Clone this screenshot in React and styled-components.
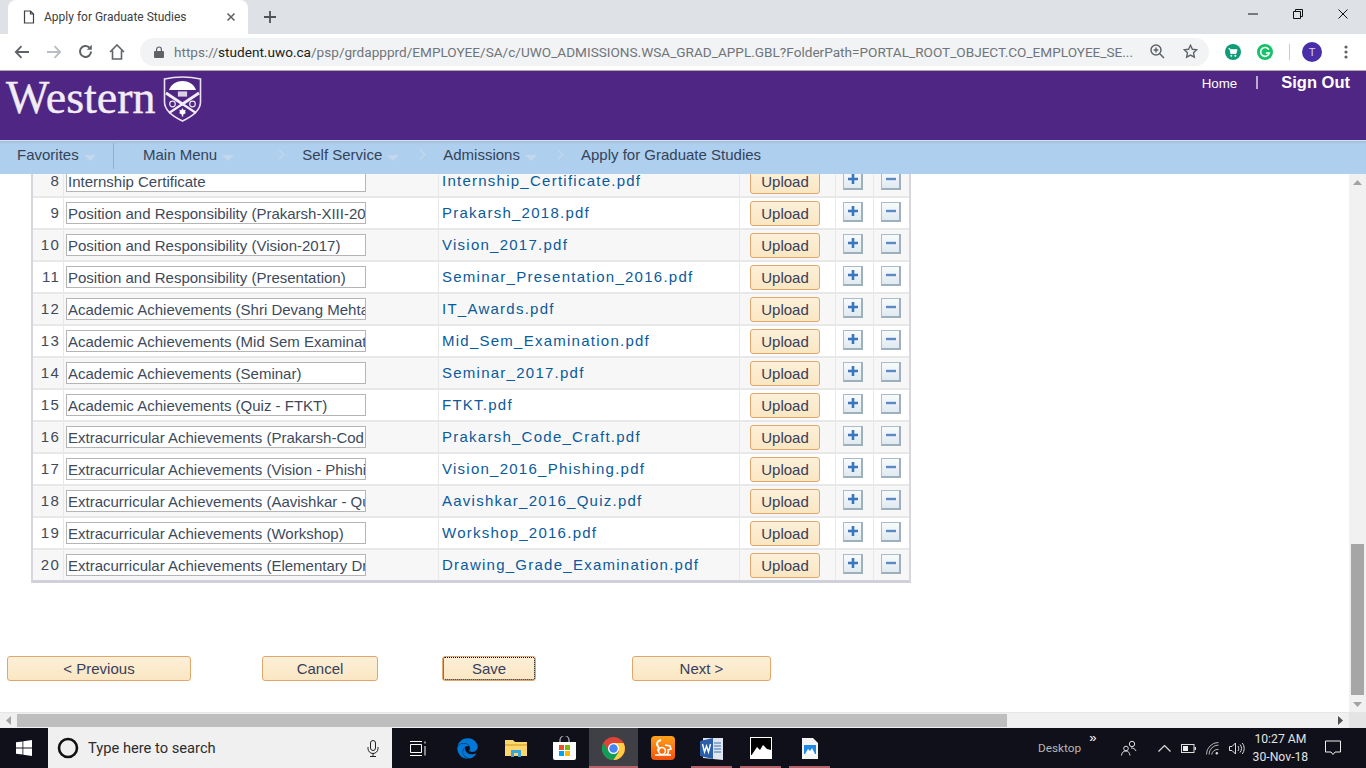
import React from 'react'
import styled, {createGlobalStyle} from 'styled-components'
import {FaEdge} from 'react-icons/fa'

const rows = [
  {n: 8, title: 'Internship Certificate', file: 'Internship_Certificate.pdf'},
  {n: 9, title: 'Position and Responsibility (Prakarsh-XIII-20', file: 'Prakarsh_2018.pdf'},
  {n: 10, title: 'Position and Responsibility (Vision-2017)', file: 'Vision_2017.pdf'},
  {n: 11, title: 'Position and Responsibility (Presentation)', file: 'Seminar_Presentation_2016.pdf'},
  {n: 12, title: 'Academic Achievements (Shri Devang Mehta', file: 'IT_Awards.pdf'},
  {n: 13, title: 'Academic Achievements (Mid Sem Examinat', file: 'Mid_Sem_Examination.pdf'},
  {n: 14, title: 'Academic Achievements (Seminar)', file: 'Seminar_2017.pdf'},
  {n: 15, title: 'Academic Achievements (Quiz - FTKT)', file: 'FTKT.pdf'},
  {n: 16, title: 'Extracurricular Achievements (Prakarsh-Cod', file: 'Prakarsh_Code_Craft.pdf'},
  {n: 17, title: 'Extracurricular Achievements (Vision - Phishi', file: 'Vision_2016_Phishing.pdf'},
  {n: 18, title: 'Extracurricular Achievements (Aavishkar - Qu', file: 'Aavishkar_2016_Quiz.pdf'},
  {n: 19, title: 'Extracurricular Achievements (Workshop)', file: 'Workshop_2016.pdf'},
  {n: 20, title: 'Extracurricular Achievements (Elementary Dr', file: 'Drawing_Grade_Examination.pdf'},
]

const App = () => {
  return (
    <Screen>
      <GlobalStyle />
      <TabStrip>
        <Tab>
          <svg width="12" height="14" viewBox="0 0 12 14" fill="none" stroke="#3c4043" strokeWidth="1.2">
            <path d="M1.5 1h6l3 3v9h-9z" />
            <path d="M7.5 1v3h3" />
          </svg>
          <TabTitle>Apply for Graduate Studies</TabTitle>
          <svg width="10" height="10" viewBox="0 0 10 10" stroke="#5f6368" strokeWidth="1.6">
            <path d="M1.500 1.500l7 7M8.500 1.500l-7 7" />
          </svg>
        </Tab>
        <NewTab>
          <svg width="12" height="12" viewBox="0 0 12 12" stroke="#4f5256" strokeWidth="1.8">
            <path d="M6 0v12M0 6h12" />
          </svg>
        </NewTab>
        <WindowButtons>
          <svg width="10" height="2" viewBox="0 0 10 2"><path d="M0 1h10" stroke="#111" strokeWidth="1" /></svg>
          <svg width="10" height="10" viewBox="0 0 10 10" fill="none" stroke="#111">
            <path d="M.5 2.500h7v7h-7zM2.500 2.500v-2h7v7h-2" />
          </svg>
          <svg width="10" height="10" viewBox="0 0 10 10" stroke="#111"><path d="M.5.5l9 9M9.500.5l-9 9" /></svg>
        </WindowButtons>
      </TabStrip>

      <Toolbar>
        <ToolIcons>
          <svg width="16" height="14" viewBox="0 0 16 14" fill="none" stroke="#5f6368" strokeWidth="1.8">
            <path d="M15 7H2M7.500 1.200L1.800 7l5.700 5.800" />
          </svg>
          <svg width="16" height="14" viewBox="0 0 16 14" fill="none" stroke="#b9bcc0" strokeWidth="1.8">
            <path d="M1 7h13M8.500 1.200L14.200 7l-5.700 5.800" />
          </svg>
          <svg width="15" height="15" viewBox="0 0 15 15" fill="none" stroke="#5f6368" strokeWidth="2">
            <path d="M13 7.500a5.500 5.500 0 1 1-1.700-4" />
            <path d="M13.800.8v5H8.800" fill="#5f6368" stroke="none" />
          </svg>
          <svg width="16" height="16" viewBox="0 0 16 16" fill="none" stroke="#5f6368" strokeWidth="1.6">
            <path d="M1 8l7-7 7 7M3.500 6.500V15h9V6.500" />
          </svg>
        </ToolIcons>
        <Omnibox>
          <svg width="10" height="12" viewBox="0 0 10 12">
            <path d="M1 5h8a1 1 0 0 1 1 1v5a1 1 0 0 1-1 1H1a1 1 0 0 1-1-1V6a1 1 0 0 1 1-1z" fill="#5f6368" />
            <path d="M2.600 5V3.400a2.400 2.400 0 0 1 4.800 0V5" fill="none" stroke="#5f6368" strokeWidth="1.2" />
          </svg>
          <Url>
            https://<b>student.uwo.ca</b>/psp/grdappprd/EMPLOYEE/SA/c/UWO_ADMISSIONS.WSA_GRAD_APPL.GBL?FolderPath=PORTAL_ROOT_OBJECT.CO_EMPLOYEE_SE...
          </Url>
          <svg width="15" height="15" viewBox="0 0 15 15" fill="none" stroke="#5f6368" strokeWidth="1.5">
            <circle cx="6" cy="6" r="5" />
            <path d="M9.800 9.800L14 14M6 3.600v4.800M3.600 6h4.800" />
          </svg>
          <svg width="15" height="15" viewBox="0 0 15 15" fill="none" stroke="#5f6368" strokeWidth="1.4">
            <path d="M7.500 1.300l1.900 3.960 4.300.56-3.150 3 .82 4.300-3.870-2.100-3.870 2.100.82-4.300-3.150-3 4.300-.56z" />
          </svg>
        </Omnibox>
        <Extensions>
          <svg width="16" height="16" viewBox="0 0 16 16">
            <circle cx="8" cy="8" r="8" fill="#0e9d76" />
            <path d="M3.500 4.500h1.300l1 5h5.200l1-3.800H5" fill="#fff" stroke="#fff" strokeWidth=".9" />
            <circle cx="6.300" cy="11.800" r="1" fill="#fff" />
            <circle cx="10.300" cy="11.800" r="1" fill="#fff" />
          </svg>
          <svg width="16" height="16" viewBox="0 0 16 16">
            <circle cx="8" cy="8" r="8" fill="#15c26b" />
            <path d="M11.800 5.600A4.400 4.400 0 1 0 12.300 9H8.800" fill="none" stroke="#fff" strokeWidth="1.700" />
          </svg>
          <ToolDivider />
          <Avatar>T</Avatar>
          <svg width="4" height="14" viewBox="0 0 4 14" fill="#5f6368">
            <circle cx="2" cy="2" r="1.600" />
            <circle cx="2" cy="7" r="1.600" />
            <circle cx="2" cy="12" r="1.600" />
          </svg>
        </Extensions>
      </Toolbar>

      <Banner>
        <Brand>
          <Wordmark>Western</Wordmark>
          <svg width="39" height="46" viewBox="0 0 39 46">
            <path d="M1.500 3C13 .5 26 .5 37.500 3v23c0 9-9.500 15-18 19-8.500-4-18-10-18-19z" fill="#4f2683" stroke="#e9e3f1" strokeWidth="1.600" />
            <path d="M6 14c2-6 8-9 13.500-9S31 8 33 14z" fill="#fff" />
            <path d="M3 17l16.500 11L36 17" fill="none" stroke="#f1ecf6" strokeWidth="2.800" />
            <path d="M19.500 28L6 37M19.500 28L33 37" stroke="#f1ecf6" strokeWidth="2.200" />
            <path d="M14.500 15h10v6h-10z" fill="#d9d0e6" stroke="#4f2683" strokeWidth=".8" />
            <circle cx="9.500" cy="28" r="2.800" fill="none" stroke="#e9e3f1" strokeWidth="1.200" />
            <circle cx="29.500" cy="28" r="2.800" fill="none" stroke="#e9e3f1" strokeWidth="1.200" />
            <path d="M19.500 32l1.200 2.300 2-.5-.7 2.500 1 .8-2.800 1.500v1.900h-1.400v-1.900L16 37.100l1-.8-.7-2.500 2 .5z" fill="#fff" />
          </svg>
        </Brand>
        <UserLinks>
          <HomeLink>Home</HomeLink>
          <LinkDivider />
          <SignOut>Sign Out</SignOut>
        </UserLinks>
      </Banner>

      <NavBar>
        <NavFavorites>
          <NavLabel>Favorites</NavLabel>
          <NavCaret />
        </NavFavorites>
        <NavCrumbs>
          <NavGroup $extra={24}>
            <NavLabel>Main Menu</NavLabel>
            <NavCaret />
          </NavGroup>
          <NavChevron />
          <NavGroup>
            <NavLabel>Self Service</NavLabel>
            <NavCaret />
          </NavGroup>
          <NavChevron />
          <NavGroup>
            <NavLabel>Admissions</NavLabel>
            <NavCaret />
          </NavGroup>
          <NavChevron />
          <NavLabel>Apply for Graduate Studies</NavLabel>
        </NavCrumbs>
      </NavBar>

      <Viewport>
        <Page>
          <Grid>
            {rows.map((r) => (
              <Row key={r.n} $alt={r.n % 2 === 0}>
                <NumCell>{r.n}</NumCell>
                <Cell>
                  <Field>{r.title}</Field>
                </Cell>
                <Cell>
                  <FileLink>{r.file}</FileLink>
                </Cell>
                <Cell>
                  <UploadButton>Upload</UploadButton>
                </Cell>
                <Cell>
                  <RowButton>
                    <svg width="12" height="12" viewBox="0 0 12 12"><path d="M6 1v10M1 6h10" stroke="#3a76c0" strokeWidth="2.600" /></svg>
                  </RowButton>
                </Cell>
                <Cell>
                  <RowButton>
                    <svg width="12" height="12" viewBox="0 0 12 12"><path d="M1 6h10" stroke="#5a8bc4" strokeWidth="2.400" /></svg>
                  </RowButton>
                </Cell>
              </Row>
            ))}
          </Grid>
          <Actions>
            <ActionButton $w={184}>&lt; Previous</ActionButton>
            <ActionButton $w={116}>Cancel</ActionButton>
            <ActionButton $w={94} $focused>Save</ActionButton>
            <ActionButton $w={139}>Next &gt;</ActionButton>
          </Actions>
        </Page>
        <VTrack>
          <svg width="9" height="5" viewBox="0 0 9 5"><path d="M4.500 0L9 5H0z" fill="#a3a3a3" /></svg>
          <VThumb />
          <svg width="9" height="5" viewBox="0 0 9 5"><path d="M0 0h9L4.500 5z" fill="#a3a3a3" /></svg>
        </VTrack>
      </Viewport>

      <HTrack>
        <svg width="5" height="9" viewBox="0 0 5 9"><path d="M5 0v9L0 4.500z" fill="#a3a3a3" /></svg>
        <HThumb />
        <svg width="5" height="9" viewBox="0 0 5 9"><path d="M0 0v9l5-4.500z" fill="#505050" /></svg>
        <HCorner />
      </HTrack>

      <Taskbar>
        <StartButton>
          <svg width="16" height="16" viewBox="0 0 16 16" fill="#fff">
            <path d="M0 2.300l6.500-.9v6.200H0zM7.300 1.300L16 0v7.600H7.300zM0 8.400h6.500v6.200L0 13.700zM7.300 8.400H16V16l-8.700-1.300z" />
          </svg>
        </StartButton>
        <SearchBox>
          <svg width="22" height="22" viewBox="0 0 22 22" fill="none" stroke="#111" strokeWidth="2.600">
            <circle cx="11" cy="11" r="9" />
          </svg>
          <SearchText>Type here to search</SearchText>
          <svg width="12" height="17" viewBox="0 0 12 17" fill="none" stroke="#222" strokeWidth="1">
            <rect x="3.500" y=".5" width="5" height="10" rx="2.500" />
            <path d="M1 7v1.500a5 5 0 0 0 10 0V7M6 13.500v3M3 16.500h6" />
          </svg>
        </SearchBox>
        <TaskApps>
          <TaskApp>
            <svg width="16" height="15" viewBox="0 0 16 15" fill="none" stroke="#fff">
              <path d="M.5 3.500h11v8H.5zM0 .5h12M0 14.500h12M15 .5v2M15 5v9.500" />
            </svg>
          </TaskApp>
          <TaskApp>
            <EdgeIcon />
          </TaskApp>
          <TaskApp>
            <svg width="22" height="18" viewBox="0 0 22 18">
              <path d="M0 1h8l2 2h12v14H0z" fill="#fbd66c" />
              <path d="M0 5h22v2H0z" fill="#e5b644" />
              <path d="M6 11h10v7h-3v-4H9v4H6z" fill="#35a6e0" />
            </svg>
          </TaskApp>
          <TaskApp>
            <svg width="23" height="24" viewBox="0 0 23 24">
              <path d="M7 7V4a4.500 4.500 0 0 1 9 0v3" fill="none" stroke="#ddd" />
              <path d="M0 6h23v16a2 2 0 0 1-2 2H2a2 2 0 0 1-2-2z" fill="#fff" />
              <path d="M6 9h5v5H6z" fill="#f25022" />
              <path d="M12 9h5v5h-5z" fill="#7fba00" />
              <path d="M6 15h5v5H6z" fill="#00a4ef" />
              <path d="M12 15h5v5h-5z" fill="#ffb900" />
            </svg>
          </TaskApp>
          <TaskApp $active $running>
            <svg width="23" height="23" viewBox="0 0 46 46">
              <circle cx="23" cy="23" r="23" fill="#db4437" />
              <path d="M23 23L3 34.500A23 23 0 0 0 23 46l11-12z" fill="#0f9d58" />
              <path d="M23 12h20a23 23 0 0 1-20 34L34 29z" fill="#ffcd40" />
              <path d="M3 11.500L13 29l10 5-20 .5A23 23 0 0 1 3 11.500z" fill="#0f9d58" />
              <circle cx="23" cy="23" r="11" fill="#fff" />
              <circle cx="23" cy="23" r="8.500" fill="#4285f4" />
            </svg>
          </TaskApp>
          <TaskApp>
            <svg width="24" height="24" viewBox="0 0 24 24">
              <defs>
                <linearGradient id="ucFill" x1="0" y1="0" x2="0" y2="1">
                  <stop offset="0" stopColor="#ffa31a" />
                  <stop offset="1" stopColor="#f2500a" />
                </linearGradient>
              </defs>
              <rect width="24" height="24" rx="4" fill="url(#ucFill)" />
              <path d="M10 4C6 5 5 8 7 10.500c1.500 2 1 3.500-1 4" fill="none" stroke="#fff" strokeWidth="2" />
              <path d="M4 19h16M14 9l5 1 1 3-3 1c1 2 0 4-2 5" fill="none" stroke="#fff" strokeWidth="1.600" />
              <circle cx="11" cy="15" r="3.400" fill="none" stroke="#fff" strokeWidth="1.500" />
            </svg>
          </TaskApp>
          <TaskApp $running>
            <svg width="23" height="23" viewBox="0 0 23 23">
              <path d="M3 1h20v22L3 21z" fill="#dfe6f0" />
              <path d="M0 4l13-3v21L0 19z" fill="#2b5ea8" />
              <path d="M14 6h7M14 9h7M14 12h7M14 15h7" stroke="#3b6cb0" />
              <path d="M2.500 7l2 8 2-6 2 6 2-8" fill="none" stroke="#fff" strokeWidth="1.400" />
            </svg>
          </TaskApp>
          <TaskApp $running>
            <svg width="22" height="22" viewBox="0 0 22 22">
              <rect width="22" height="22" fill="#fff" />
              <rect x="1" y="1" width="20" height="18" fill="#000" />
              <path d="M1 19l6-9 3 3 3-5 4 4 4 1v6z" fill="#fff" />
              <rect y="18" width="22" height="4" fill="#fff" />
            </svg>
          </TaskApp>
          <TaskApp $running>
            <svg width="16" height="21" viewBox="0 0 16 21">
              <path d="M0 0h11l5 5v16H0z" fill="#f4f4f4" />
              <path d="M2 7h12v9H2z" fill="#1e88e5" />
              <path d="M3 16l3-5 2 2 2-3 3 6z" fill="#fff" />
            </svg>
          </TaskApp>
        </TaskApps>
        <Tray>
          <DesktopLabel>Desktop</DesktopLabel>
          <Overflow>»</Overflow>
          <svg width="16" height="16" viewBox="0 0 16 16" fill="none" stroke="#ddd">
            <circle cx="11" cy="4" r="2.700" />
            <circle cx="5" cy="8.500" r="2.300" />
            <path d="M.5 15.500c.3-3 1.800-4.500 4.500-4.500s3.500 2 4 4.500M10 8c2 0 4 .5 5 3" />
          </svg>
          <TrayIcons>
            <svg width="13" height="7" viewBox="0 0 13 7" fill="none" stroke="#ddd" strokeWidth="1.200"><path d="M.5 6.500l6-6 6 6" /></svg>
            <svg width="15" height="9" viewBox="0 0 15 9">
              <rect x=".5" y=".5" width="12.500" height="8" fill="none" stroke="#ddd" />
              <rect x="2" y="2" width="5" height="5" fill="#eee" />
              <rect x="13.500" y="3" width="1.500" height="3" fill="#ddd" />
            </svg>
            <svg width="13" height="13" viewBox="0 0 15 15" fill="none" stroke="#ccc">
              <path d="M.5 14.500a14 14 0 0 1 14-14M3.500 14.500a11 11 0 0 1 11-11M6.500 14.500a8 8 0 0 1 8-6" />
              <circle cx="12.500" cy="13" r="1.400" fill="#ddd" stroke="none" />
            </svg>
            <svg width="16" height="13" viewBox="0 0 16 13" fill="none" stroke="#ddd">
              <path d="M.5 4.500h2.500l3.500-3.500v11L3 8.500H.5zM9 4c1 1.500 1 3.500 0 5M11 2.500c2 2 2 6 0 8M13.200 1c2.600 3 2.600 8 0 11" />
            </svg>
          </TrayIcons>
          <Clock>
            <span>10:27 AM</span>
            <span>30-Nov-18</span>
          </Clock>
          <svg width="16" height="16" viewBox="0 0 16 16" fill="none" stroke="#eee">
            <path d="M.5 1h15v11H10l-2 2.500L6 12H.5z" />
          </svg>
        </Tray>
      </Taskbar>
    </Screen>
  )
}

const EdgeIcon = styled(FaEdge)`
  width: 21px;
  height: 21px;
  margin-left: 2px;
  color: #0078d7;
`;

const GlobalStyle = createGlobalStyle`
  html, body {
    margin: 0;
    padding: 0;
    overflow: hidden;
    background: #fff;
    font-family: "Liberation Sans", Arial, sans-serif;
  }
  * {
    box-sizing: border-box;
  }
`;

const Screen = styled.div`
  width: 1366px;
  height: 768px;
  display: flex;
  flex-direction: column;
  overflow: hidden;
`;

const TabStrip = styled.div`
  height: 34px;
  flex: none;
  background: #dee1e6;
  display: flex;
  align-items: flex-end;
  padding-left: 8px;
`;

const Tab = styled.div`
  width: 240px;
  height: 34px;
  background: #fff;
  border-radius: 8px 8px 0 0;
  display: flex;
  align-items: center;
  padding: 0 12px 0 15px;
`;

const TabTitle = styled.span`
  flex: 1;
  margin-left: 9px;
  font-family: Roboto, sans-serif;
  font-size: 12px;
  color: #3c4043;
`;

const NewTab = styled.div`
  width: 44px;
  height: 34px;
  display: flex;
  align-items: center;
  justify-content: center;
`;

const WindowButtons = styled.div`
  margin-left: auto;
  height: 34px;
  display: flex;
  align-items: center;
  gap: 35px;
  padding: 0 18px 6px 0;
`;

const Toolbar = styled.div`
  height: 37px;
  flex: none;
  background: #fff;
  border-bottom: 1px solid #a9a9a9;
  display: flex;
  align-items: center;
  padding-bottom: 1px;
`;

const ToolIcons = styled.div`
  width: 140px;
  display: flex;
  align-items: center;
  gap: 16px;
  padding-left: 14px;
`;

const Omnibox = styled.div`
  width: 1069px;
  height: 28px;
  background: #f1f3f4;
  border-radius: 14px;
  display: flex;
  align-items: center;
  padding: 0 11px 0 14px;
  gap: 10px;

  svg:last-child {
    margin-left: 8px;
  }
`;

const Url = styled.div`
  width: 968px;
  font-family: Roboto, sans-serif;
  font-size: 13.6px;
  color: #70757a;
  white-space: nowrap;

  b {
    font-weight: 400;
    color: #202124;
  }
`;

const Extensions = styled.div`
  flex: 1;
  display: flex;
  align-items: center;
  padding-left: 16px;
  gap: 16px;

  svg:last-child {
    margin-left: 6px;
  }
`;

const ToolDivider = styled.div`
  width: 1px;
  height: 16px;
  background: #c8cacd;
`;

const Avatar = styled.div`
  width: 20px;
  height: 20px;
  margin-left: -4px;
  border-radius: 50%;
  background: #4a2ea8;
  color: #d9d2f2;
  font-size: 11px;
  text-align: center;
  line-height: 20px;
`;

const Banner = styled.div`
  height: 69px;
  flex: none;
  background: #4f2683;
  display: flex;
  justify-content: space-between;
  align-items: flex-start;
  color: #fff;
`;

const Brand = styled.div`
  display: flex;
  align-items: flex-start;
  gap: 7px;
  padding: 5px 0 0 6px;
`;

const Wordmark = styled.div`
  font-family: "Liberation Serif", serif;
  font-size: 46px;
  line-height: 43px;
  color: #f1ecf6;
  -webkit-text-stroke: 0.4px #f1ecf6;
`;

const UserLinks = styled.div`
  display: flex;
  align-items: flex-start;
  padding: 2px 16px 0 0;
`;

const HomeLink = styled.span`
  font-size: 13.33px;
  line-height: 19px;
  padding-top: 1px;
`;

const LinkDivider = styled.div`
  width: 2px;
  height: 13px;
  margin: 3px 23px 0 19px;
  background: #b9acd0;
`;

const SignOut = styled.span`
  font-size: 16.5px;
  font-weight: 700;
  line-height: 19px;
`;

const NavBar = styled.div`
  height: 34px;
  flex: none;
  background: #afcfee;
  border-top: 1px solid #d3e1ef;
  box-shadow: inset 0 3px 2px -1px #a3c1de;
  display: flex;
  align-items: flex-start;
  padding-top: 2px;
`;

const NavFavorites = styled.div`
  width: 114px;
  height: 26px;
  padding: 3px 0 0 17px;
  border-right: 1px solid #8fb1d2;
  display: flex;
  align-items: flex-start;
  gap: 5px;
`;

const NavCrumbs = styled.div`
  display: flex;
  align-items: flex-start;
  padding: 3px 0 0 29px;
`;

const NavGroup = styled.div`
  display: flex;
  gap: 5px;
  padding-right: ${(p) => p.$extra || 0}px;
`;

const NavLabel = styled.span`
  font-size: 15px;
  line-height: 17px;
  color: #33435a;
  white-space: nowrap;
`;

const NavCaret = styled.span`
  width: 0;
  height: 0;
  margin-top: 9px;
  border-left: 6px solid transparent;
  border-right: 6px solid transparent;
  border-top: 6px solid #c3d8ec;
`;

const NavChevron = styled.span`
  width: 7px;
  height: 7px;
  margin: 5px 19px 0 18px;
  border-top: 1.500px solid #c6daee;
  border-right: 1.500px solid #c6daee;
  transform: rotate(45deg);
`;

const Viewport = styled.div`
  flex: 1;
  min-height: 0;
  display: flex;
  overflow: hidden;
`;

const Page = styled.div`
  flex: 1;
  min-width: 0;
  overflow: hidden;
`;

const Grid = styled.div`
  width: 880px;
  margin: -8px 0 0 31px;
  border-left: 2px solid #d6d6dc;
  border-right: 2px solid #d6d6dc;
  border-bottom: 1px solid #d0d0d8;
`;

const Row = styled.div`
  height: 32px;
  display: grid;
  grid-template-columns: 30px 375px 301px 96px 38px 36px;
  background: ${(p) => (p.$alt ? '#f7f7f7' : '#fff')};
  border-bottom: 2px solid #e8e8e8;

  &:last-child {
    border-bottom-color: #d0d0d8;
  }
`;

const Cell = styled.div`
  display: flex;
  align-items: center;
  padding: 0 0 0 2px;
  border-left: 1px solid #e8e8e8;
`;

const NumCell = styled.div`
  font-size: 15px;
  line-height: 30px;
  text-align: right;
  padding-right: 3px;
  color: #404a59;
  letter-spacing: 1.25px;
`;

const Field = styled.div`
  width: 300px;
  height: 22px;
  border: 1px solid #b5b5b5;
  background: #fff;
  padding: 0 0 0 1px;
  font-size: 15px;
  line-height: 21px;
  color: #3e4a5c;
  white-space: nowrap;
  overflow: hidden;
`;

const FileLink = styled.span`
  font-size: 15px;
  line-height: 17px;
  margin: -2px 0 0 1px;
  color: #0a5a9c;
  letter-spacing: 1.25px;
  white-space: nowrap;
`;

const OrangeButton = styled.button`
  font-family: "Liberation Sans", Arial, sans-serif;
  font-size: 15px;
  color: #36405a;
  background: linear-gradient(#fdf0d8, #fae6c2);
  border: 1px solid #dfa76e;
  border-radius: 3px;
  padding: 0;
`;

const UploadButton = styled(OrangeButton)`
  width: 70px;
  height: 25px;
  margin-left: 8px;
  padding-top: 1px;
`;

const RowButton = styled.div`
  width: 20px;
  height: 20px;
  margin: -3px 0 0 5px;
  background: linear-gradient(#f8fbfd, #e0eaf0);
  border: 1px solid #a9bcc8;
  border-right: 2px solid #9db0bb;
  border-bottom: 2px solid #9db0bb;
  display: flex;
  align-items: center;
  justify-content: center;
`;

const Actions = styled.div`
  display: flex;
  padding: 73px 0 0 7px;

  button:nth-child(2) {
    margin-left: 71px;
  }
  button:nth-child(3) {
    margin-left: 64px;
  }
  button:nth-child(4) {
    margin-left: 96px;
  }
`;

const ActionButton = styled(OrangeButton)`
  width: ${(p) => p.$w}px;
  height: 25px;
  outline: ${(p) => (p.$focused ? '1px dotted #000' : 'none')};
  outline-offset: -2px;
`;

const VTrack = styled.div`
  width: 17px;
  flex: none;
  background: #f1f1f1;
  display: flex;
  flex-direction: column;
  align-items: center;
  padding: 6px 0 5px;
`;

const VThumb = styled.div`
  width: 13px;
  height: 151px;
  margin: auto 0 7px;
  background: #a6a6a6;
`;

const HTrack = styled.div`
  height: 16px;
  flex: none;
  background: #f0f0f0;
  display: flex;
  align-items: center;
  padding-left: 6px;
  border-top: 1px solid #e6e6e6;

  svg:nth-of-type(2) {
    margin-left: 331px;
  }
`;

const HThumb = styled.div`
  width: 990px;
  height: 13px;
  margin-left: 6px;
  background: #bebebe;
`;

const HCorner = styled.div`
  width: 17px;
  height: 15px;
  margin-left: 6px;
  background: #e4e4e4;
`;

const Taskbar = styled.div`
  height: 40px;
  flex: none;
  background: #10101a;
  display: flex;
  align-items: stretch;
`;

const StartButton = styled.div`
  width: 48px;
  display: flex;
  align-items: center;
  justify-content: center;
`;

const SearchBox = styled.div`
  width: 344px;
  background: #f0f0f0;
  display: flex;
  align-items: center;
  padding: 0 13px 0 9px;
`;

const SearchText = styled.span`
  flex: 1;
  margin-left: 9px;
  font-family: Roboto, sans-serif;
  font-size: 14.7px;
  color: #2c2c2c;
`;

const TaskApps = styled.div`
  display: flex;
  padding-left: 1px;
`;

const TaskApp = styled.div`
  width: 49px;
  position: relative;
  display: flex;
  align-items: center;
  justify-content: center;
  background: ${(p) => (p.$active ? '#3f3f46' : 'transparent')};

  &::after {
    content: "";
    position: absolute;
    bottom: 0;
    left: ${(p) => (p.$active ? '0' : '4px')};
    right: ${(p) => (p.$active ? '0' : '4px')};
    height: 2px;
    background: ${(p) => (p.$running || p.$active ? '#b4636b' : 'transparent')};
  }
`;

const Tray = styled.div`
  flex: 1;
  display: flex;
  align-items: center;
  color: #ddd;
  padding-left: 204px;
`;

const DesktopLabel = styled.span`
  font-family: Roboto, sans-serif;
  font-size: 11.8px;
  color: #b5b5b5;
`;

const Overflow = styled.span`
  margin: -22px 25px 0 8px;
  font-size: 13px;
  color: #fff;
`;

const TrayIcons = styled.div`
  display: flex;
  align-items: center;
  gap: 10px;
  margin: 0 3px 0 21px;
`;

const Clock = styled.div`
  width: 64px;
  display: flex;
  flex-direction: column;
  align-items: center;
  font-family: Roboto, sans-serif;
  font-size: 12.2px;
  line-height: 18px;
  color: #e2e2e2;
  margin-right: 13px;
`;

export default App
